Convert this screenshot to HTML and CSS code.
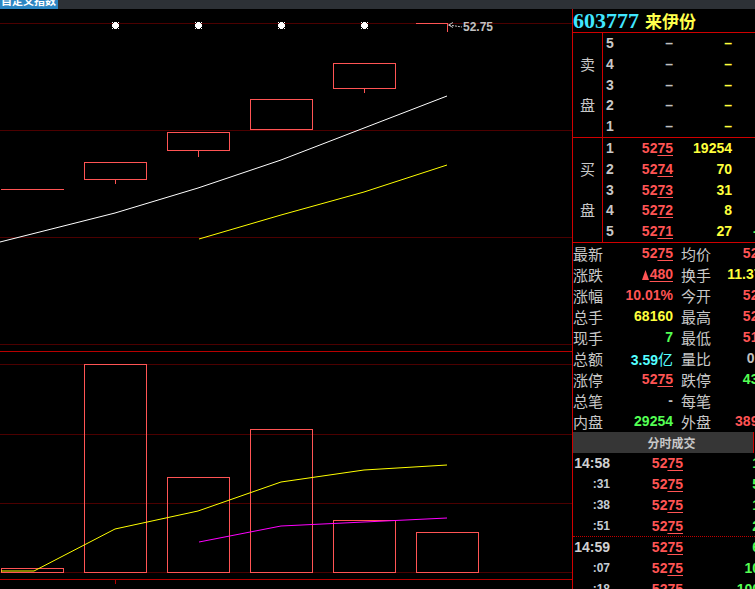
FILE: index.html
```html
<!DOCTYPE html>
<html lang="zh-CN">
<head>
<meta charset="utf-8">
<title>来伊份 603777</title>
<link rel="stylesheet" href="styles.css">
</head>
<body>
<div class="topbar"><div class="tab"><span>自定义指数</span></div></div>
<div class="main">
  <div class="chart">
    <svg class="kline" width="572" height="580" viewBox="0 9 572 580">
      <g class="grid-dark">
        <line x1="0" y1="23.5" x2="572" y2="23.5"/>
        <line x1="0" y1="130.5" x2="572" y2="130.5"/>
        <line x1="0" y1="237.5" x2="572" y2="237.5"/>
        <line x1="0" y1="344.5" x2="572" y2="344.5"/>
        <line x1="0" y1="364.5" x2="572" y2="364.5"/>
        <line x1="0" y1="434.5" x2="572" y2="434.5"/>
        <line x1="0" y1="503.5" x2="572" y2="503.5"/>
        <line x1="0" y1="572.5" x2="572" y2="572.5"/>
      </g>
      <g class="grid-bright">
        <line x1="0" y1="351.5" x2="572" y2="351.5"/>
        <line x1="0" y1="579.5" x2="572" y2="579.5"/>
        <line x1="115.5" y1="579" x2="115.5" y2="584"/>
      </g>
      <g class="stars">
        <g transform="translate(115 25)"><rect x="-2" y="-2" width="5" height="5"/><rect x="-3" y="-1" width="7" height="3"/><rect x="-1" y="-3" width="3" height="7"/><rect x="-3" y="-3" width="1" height="1"/><rect x="3" y="-3" width="1" height="1"/><rect x="-3" y="3" width="1" height="1"/><rect x="3" y="3" width="1" height="1"/></g>
        <g transform="translate(198 25)"><rect x="-2" y="-2" width="5" height="5"/><rect x="-3" y="-1" width="7" height="3"/><rect x="-1" y="-3" width="3" height="7"/><rect x="-3" y="-3" width="1" height="1"/><rect x="3" y="-3" width="1" height="1"/><rect x="-3" y="3" width="1" height="1"/><rect x="3" y="3" width="1" height="1"/></g>
        <g transform="translate(281 25)"><rect x="-2" y="-2" width="5" height="5"/><rect x="-3" y="-1" width="7" height="3"/><rect x="-1" y="-3" width="3" height="7"/><rect x="-3" y="-3" width="1" height="1"/><rect x="3" y="-3" width="1" height="1"/><rect x="-3" y="3" width="1" height="1"/><rect x="3" y="3" width="1" height="1"/></g>
        <g transform="translate(364 25)"><rect x="-2" y="-2" width="5" height="5"/><rect x="-3" y="-1" width="7" height="3"/><rect x="-1" y="-3" width="3" height="7"/><rect x="-3" y="-3" width="1" height="1"/><rect x="3" y="-3" width="1" height="1"/><rect x="-3" y="3" width="1" height="1"/><rect x="3" y="3" width="1" height="1"/></g>
      </g>
      <g class="candle">
        <line x1="1" y1="189.5" x2="64" y2="189.5"/>
        <rect x="84.5" y="162.5" width="62" height="17"/>
        <line x1="115.5" y1="180" x2="115.5" y2="184"/>
        <rect x="167.5" y="132.5" width="62" height="18"/>
        <line x1="198.5" y1="151" x2="198.5" y2="157"/>
        <rect x="250.5" y="99.5" width="62" height="30"/>
        <rect x="333.5" y="63.5" width="62" height="25"/>
        <line x1="364.5" y1="89" x2="364.5" y2="93"/>
        <line x1="416" y1="23.5" x2="448" y2="23.5"/>
        <line x1="447.5" y1="23" x2="447.5" y2="32"/>
      </g>
      <polyline class="ma-white" points="0,242 115,213 198,188 281,160 364,128 447,96"/>
      <polyline class="ma-yellow" points="199,239 281,215 364,192 447,165"/>
      <g class="arrow">
        <path d="M453 22.5 L448.5 25 L453 27.5"/>
        <line x1="449" y1="25" x2="462" y2="27" class="dash"/>
      </g>
      <text class="maxlabel" x="463" y="31">52.75</text>
      <g class="candle">
        <rect x="1.5" y="568.5" width="62" height="4"/>
        <rect x="84.5" y="364.5" width="62" height="208"/>
        <rect x="167.5" y="477.5" width="62" height="95"/>
        <rect x="250.5" y="429.5" width="62" height="143"/>
        <rect x="333.5" y="520.5" width="62" height="52"/>
        <rect x="416.5" y="532.5" width="62" height="40"/>
      </g>
      <polyline class="ma-yellow" points="1,571 34,571 115,529 198,511 281,482 364,470 447,465"/>
      <polyline class="ma-magenta" points="199,542 281,526 364,522 447,518"/>
    </svg>
  </div>

  <aside class="panel">
    <div class="title"><span class="code">603777</span><span class="name">来伊份</span></div>

    <div class="book">
      <div class="side"><span></span><span>卖</span><span></span><span>盘</span><span></span></div>
      <div class="rows">
        <div class="row"><span class="lv">5</span><span class="pr gray">–</span><span class="vol yellow">–</span></div>
        <div class="row"><span class="lv">4</span><span class="pr gray">–</span><span class="vol yellow">–</span></div>
        <div class="row"><span class="lv">3</span><span class="pr gray">–</span><span class="vol yellow">–</span></div>
        <div class="row"><span class="lv">2</span><span class="pr gray">–</span><span class="vol yellow">–</span></div>
        <div class="row"><span class="lv">1</span><span class="pr gray">–</span><span class="vol yellow">–</span></div>
      </div>
    </div>

    <div class="book">
      <div class="side"><span></span><span>买</span><span></span><span>盘</span><span></span></div>
      <div class="rows">
        <div class="row"><span class="lv">1</span><span class="pr red">52<span class="u">75</span></span><span class="vol yellow">19254</span></div>
        <div class="row"><span class="lv">2</span><span class="pr red">52<span class="u">74</span></span><span class="vol yellow">70</span></div>
        <div class="row"><span class="lv">3</span><span class="pr red">52<span class="u">73</span></span><span class="vol yellow">31</span></div>
        <div class="row"><span class="lv">4</span><span class="pr red">52<span class="u">72</span></span><span class="vol yellow">8</span></div>
        <div class="row"><span class="lv">5</span><span class="pr red">52<span class="u">71</span></span><span class="vol yellow">27</span><span class="chg green">-</span></div>
      </div>
    </div>

    <div class="stats">
      <div class="srow"><span class="lb">最新</span><span class="v red">52<span class="u">75</span></span><span class="lb lb2">均价</span><span class="v red">5253</span></div>
      <div class="srow"><span class="lb">涨跌</span><span class="v red"><svg class="tri" width="7" height="10" viewBox="0 0 7 10"><path d="M3.5 0 L7 10 L0 10Z"/></svg><span class="u">480</span></span><span class="lb lb2">换手</span><span class="v yellow">11.37%</span></div>
      <div class="srow"><span class="lb">涨幅</span><span class="v red">10.01%</span><span class="lb lb2">今开</span><span class="v red">5250</span></div>
      <div class="srow"><span class="lb">总手</span><span class="v yellow">68160</span><span class="lb lb2">最高</span><span class="v red">5275</span></div>
      <div class="srow"><span class="lb">现手</span><span class="v green">7</span><span class="lb lb2">最低</span><span class="v red">5170</span></div>
      <div class="srow"><span class="lb">总额</span><span class="v cyan">3.59<span class="cnv">亿</span></span><span class="lb lb2">量比</span><span class="v gray">0.96</span></div>
      <div class="srow"><span class="lb">涨停</span><span class="v red">52<span class="u">75</span></span><span class="lb lb2">跌停</span><span class="v green">4316</span></div>
      <div class="srow"><span class="lb">总笔</span><span class="v gray">-</span><span class="lb lb2">每笔</span><span class="v gray"></span></div>
      <div class="srow"><span class="lb">内盘</span><span class="v green">29254</span><span class="lb lb2">外盘</span><span class="v red">38906</span></div>
    </div>

    <div class="tickhead">分时成交</div>

    <div class="ticks">
      <div class="tgroup">
        <div class="trow"><span class="t big">14:58</span><span class="tp red">52<span class="u">75</span></span><span class="tv green">1</span></div>
        <div class="trow"><span class="t">:31</span><span class="tp red">52<span class="u">75</span></span><span class="tv green">5</span></div>
        <div class="trow"><span class="t">:38</span><span class="tp red">52<span class="u">75</span></span><span class="tv green">1</span></div>
        <div class="trow"><span class="t">:51</span><span class="tp red">52<span class="u">75</span></span><span class="tv green">2</span></div>
      </div>
      <div class="tgroup sep">
        <div class="trow"><span class="t big">14:59</span><span class="tp red">52<span class="u">75</span></span><span class="tv green">6</span></div>
        <div class="trow"><span class="t">:07</span><span class="tp red">52<span class="u">75</span></span><span class="tv green">10</span></div>
        <div class="trow"><span class="t">:18</span><span class="tp red">52<span class="u">75</span></span><span class="tv green">100</span></div>
      </div>
    </div>
  </aside>
</div>
</body>
</html>
```

FILE: styles.css
```css
* { box-sizing: border-box; }
html, body {
  margin: 0;
  padding: 0;
  width: 755px;
  height: 589px;
  overflow: hidden;
  background: #000;
}
body {
  font-family: "Liberation Sans", "Noto Sans CJK SC", sans-serif;
}

/* top bar */
.topbar {
  height: 9px;
  background: #2d3136;
  display: flex;
  overflow: hidden;
}
.tab {
  width: 58px;
  height: 9px;
  background: #2c86c3;
  overflow: hidden;
}
.tab span {
  display: block;
  margin-top: -7px;
  padding-left: 1px;
  font: bold 11px/14px "Noto Sans CJK SC", sans-serif;
  color: #fff;
  white-space: nowrap;
}

.main {
  display: flex;
  height: 580px;
}

/* chart */
.chart {
  width: 572px;
  flex-shrink: 0;
}
.kline { display: block; }
.grid-dark line { stroke: #4c0000; stroke-width: 1; }
.grid-bright line { stroke: #b80000; stroke-width: 1; }
.stars rect { fill: #fff; }
.candle rect, .candle line { fill: none; stroke: #ff5454; stroke-width: 1; }
.ma-white { fill: none; stroke: #fff; stroke-width: 1; }
.ma-yellow { fill: none; stroke: #ffff00; stroke-width: 1; }
.ma-magenta { fill: none; stroke: #ff00ff; stroke-width: 1; }
.arrow path, .arrow line { fill: none; stroke: #c0c0c0; stroke-width: 1; }
.arrow .dash { stroke-dasharray: 2 1; }
.maxlabel {
  font-family: "Liberation Sans", sans-serif;
  font-weight: bold;
  font-size: 12px;
  fill: #c0c0c0;
}

/* side panel */
.panel {
  width: 215px;
  flex-shrink: 0;
  border-left: 1px solid #d00000;
  font: bold 14px "Liberation Sans", "Noto Sans CJK SC", sans-serif;
  color: #c0c0c0;
}
.red { color: #ff5454; }
.yellow { color: #ffff3c; }
.green { color: #54ff54; }
.cyan { color: #54ffff; }
.gray { color: #c0c0c0; }
.u {
  text-decoration: underline;
  text-decoration-thickness: 1px;
  text-underline-offset: 2px;
}

.title {
  height: 24px;
  border-bottom: 1px solid #d00000;
  display: flex;
  align-items: center;
  gap: 6px;
  padding-top: 1px;
}
.code {
  font: bold 22px/22px "Liberation Serif", serif;
  color: #40e6ff;
}
.name {
  font: bold 17px/22px "Noto Sans CJK SC", sans-serif;
  color: #ffff4c;
}

.book {
  display: flex;
  height: 105px;
  border-bottom: 1px solid #d00000;
}
.side {
  width: 30px;
  border-right: 1px solid #d00000;
  display: flex;
  flex-direction: column;
  align-items: center;
  font: 15px/20.8px "Noto Sans CJK SC", sans-serif;
  color: #c8c8c8;
}
.side span { height: 20.8px; }
.rows { flex: 1; }
.row {
  height: 20.8px;
  line-height: 20.8px;
  display: grid;
  grid-template-columns: 30px 40px 59px 30px;
}
.lv { padding-left: 3px; color: #c8c8c8; }
.pr, .vol { text-align: right; white-space: nowrap; }
.chg { padding-left: 21px; }

.stats { }
.srow {
  height: 21px;
  line-height: 21px;
  display: grid;
  grid-template-columns: 30px 70px 38px 63px;
  white-space: nowrap;
}
.lb {
  font: 15px/21px "Noto Sans CJK SC", sans-serif;
  color: #c8c8c8;
}
.lb2 { padding-left: 8px; }
.srow .v { text-align: right; }
.cnv {
  font: 15px/21px "Noto Sans CJK SC", sans-serif;
}
.tri {
  fill: #ff5454;
  margin-right: 1px;
  vertical-align: -1px;
}

.tickhead {
  width: 181px;
  height: 21px;
  background: #363636;
  border-right: 1px solid #d00000;
  padding-left: 17px;
  text-align: center;
  font: bold 12px/21px "Noto Sans CJK SC", sans-serif;
  color: #c8c8c8;
}

.tgroup.sep {
  border-top: 1px dotted #c00000;
  margin-top: -1px;
}
.trow {
  height: 21px;
  line-height: 21px;
  display: grid;
  grid-template-columns: 37px 73px 77px;
  white-space: nowrap;
}
.t {
  text-align: right;
  font-size: 12px;
  color: #c4ccd4;
}
.t.big {
  font-size: 14px;
  color: #d0d0d0;
}
.tp, .tv { text-align: right; }
```
